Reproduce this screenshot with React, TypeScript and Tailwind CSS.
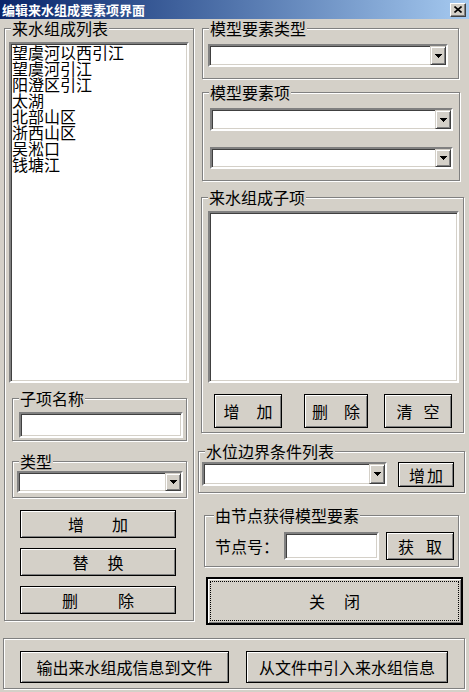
import React from 'react';

const sunken =
  'border-2 border-t-[#808080] border-l-[#808080] border-b-white border-r-white shadow-[inset_1px_1px_0_#404040,inset_-1px_-1px_0_#d4d0c8] bg-white';

const raised =
  'border border-black bg-[#d4d0c8] shadow-[inset_1px_1px_0_#fff,inset_-1px_-1px_0_#808080]';

function Group({
  label,
  className = '',
  labelLeft = 'left-[6px]',
  children,
}: {
  label: string;
  className?: string;
  labelLeft?: string;
  children?: React.ReactNode;
}) {
  return (
    <div className={`relative border border-[#808080] shadow-[1px_1px_0_#fff,inset_1px_1px_0_#fff] ${className}`}>
      <span className={`absolute -top-[9px] ${labelLeft} bg-[#d4d0c8] px-[1px] text-[16px] leading-[16px] whitespace-nowrap`}>
        {label}
      </span>
      {children}
    </div>
  );
}

function Combo({ className = '' }: { className?: string }) {
  return (
    <div className={`${sunken} flex justify-end ${className}`}>
      <div className="w-[16px] h-full bg-[#d4d0c8] border border-t-[#d4d0c8] border-l-[#d4d0c8] border-b-[#404040] border-r-[#404040] shadow-[inset_1px_1px_0_#fff,inset_-1px_-1px_0_#808080] flex items-center justify-center">
        <svg width="7" height="4" shapeRendering="crispEdges">
          <path d="M0 0h7v1h-1v1h-1v1h-1v1h-1v-1h-1v-1h-1v-1h-1z" fill="#000" />
        </svg>
      </div>
    </div>
  );
}

function Btn({ className = '', children }: { className?: string; children: React.ReactNode }) {
  return (
    <div className={`${raised} flex items-center justify-center text-[16px] leading-[16px] whitespace-nowrap ${className}`}>
      {children}
    </div>
  );
}

function Two({ a, b, gap }: { a: string; b: string; gap: string }) {
  return (
    <>
      <span>{a}</span>
      <span className={gap}>{b}</span>
    </>
  );
}

const items = ['望虞河以西引江', '望虞河引江', '阳澄区引江', '太湖', '北部山区', '浙西山区', '吴淞口', '钱塘江'];

export default function App() {
  return (
    <div className="w-[469px] h-[692px] bg-[#d4d0c8] overflow-hidden text-black font-['Noto_Sans_CJK_SC',sans-serif]">
      {/* title bar */}
      <div className="h-[19px] flex items-center justify-between bg-linear-to-r from-[#0a246a] to-[#a6caf0] pl-[2px] pr-[3px]">
        <span className="text-white font-bold text-[13px] leading-[13px]">编辑来水组成要素项界面</span>
        <div className="w-[16px] h-[14px] bg-[#d4d0c8] border border-t-white border-l-white border-b-[#404040] border-r-[#404040] shadow-[inset_-1px_-1px_0_#808080] flex items-center justify-center">
          <svg width="8" height="7">
            <path d="M0.5 0.5L7.5 6.5M7.5 0.5L0.5 6.5" stroke="#000" strokeWidth="1.6" />
          </svg>
        </div>
      </div>

      <div className="flex items-start h-[606px]">
        {/* left column */}
        <Group label="来水组成列表" className="ml-[4px] mt-[9px] w-[190px] h-[593px]">
          <div className={`${sunken} ml-[4px] mt-[13px] w-[180px] h-[341px] pl-[1px] text-[16px] leading-[16px]`}>
            {items.map((t) => (
              <div key={t}>{t}</div>
            ))}
          </div>
          <Group label="子项名称" className="ml-[7px] mt-[15px] w-[175px] h-[43px]">
            <div className={`${sunken} ml-[6px] mt-[13px] w-[164px] h-[26px]`} />
          </Group>
          <Group label="类型" className="ml-[7px] mt-[20px] w-[175px] h-[37px]">
            <Combo className="ml-[4px] mt-[9px] w-[166px] h-[22px]" />
          </Group>
          <Btn className="ml-[15px] mt-[12px] w-[156px] h-[28px]">
            <Two a="增" b="加" gap="ml-[28px]" />
          </Btn>
          <Btn className="ml-[15px] mt-[10px] w-[156px] h-[28px]">
            <Two a="替" b="换" gap="ml-[19px]" />
          </Btn>
          <Btn className="ml-[15px] mt-[10px] w-[156px] h-[28px]">
            <Two a="删" b="除" gap="ml-[40px]" />
          </Btn>
        </Group>

        {/* right column */}
        <div className="ml-[4px] w-[267px] flex flex-col items-start">
          <Group label="模型要素类型" className="ml-[4px] mt-[9px] w-[257px] h-[51px]">
            <Combo className="ml-[5px] mt-[15px] w-[240px] h-[23px]" />
          </Group>
          <Group label="模型要素项" className="ml-[4px] mt-[13px] w-[258px] h-[89px]">
            <Combo className="ml-[7px] mt-[15px] w-[243px] h-[23px]" />
            <Combo className="ml-[7px] mt-[16px] w-[243px] h-[22px]" />
          </Group>
          <Group label="来水组成子项" className="ml-[3px] mt-[16px] w-[263px] h-[236px]">
            <div className={`${sunken} ml-[6px] mt-[13px] w-[251px] h-[172px]`} />
            <div className="flex mt-[11px] ml-[12px]">
              <Btn className="w-[68px] h-[34px]">
                <Two a="增" b="加" gap="ml-[17px]" />
              </Btn>
              <Btn className="ml-[22px] w-[64px] h-[34px]">
                <Two a="删" b="除" gap="ml-[16px]" />
              </Btn>
              <Btn className="ml-[16px] w-[68px] h-[34px]">
                <Two a="清" b="空" gap="ml-[11px]" />
              </Btn>
            </div>
          </Group>
          <Group label="水位边界条件列表" className="mt-[18px] w-[267px] h-[42px]">
            <div className="flex items-start mt-[10px] ml-[3px]">
              <Combo className="w-[185px] h-[24px]" />
              <Btn className="ml-[11px] w-[56px] h-[25px]">
                <Two a="增" b="加" gap="ml-[2px]" />
              </Btn>
            </div>
          </Group>
          <Group label="由节点获得模型要素" labelLeft="left-[9px]" className="ml-[6px] mt-[22px] w-[255px] h-[52px]">
            <div className="flex items-center mt-[16px] ml-[10px]">
              <span className="w-[69px] text-[16px] leading-[16px]">节点号：</span>
              <div className={`${sunken} w-[95px] h-[28px]`} />
              <Btn className="ml-[7px] w-[68px] h-[28px]">
                <Two a="获" b="取" gap="ml-[12px]" />
              </Btn>
            </div>
          </Group>
          <div className="ml-[8px] mt-[10px] w-[257px] h-[48px] border-2 border-black bg-[#d4d0c8] shadow-[inset_1px_1px_0_#fff,inset_-1px_-1px_0_#808080] p-[2px] flex">
            <div className="flex-1 border border-dotted border-black flex items-center justify-center text-[16px] leading-[16px]">
              <Two a="关" b="闭" gap="ml-[19px]" />
            </div>
          </div>
        </div>
      </div>

      {/* bottom */}
      <Group label="" className="ml-[3px] mt-[13px] w-[462px] h-[51px]">
        <div className="flex mt-[12px] ml-[16px]">
          <Btn className="w-[209px] h-[32px]">输出来水组成信息到文件</Btn>
          <Btn className="ml-[17px] w-[202px] h-[32px]">从文件中引入来水组信息</Btn>
        </div>
      </Group>
    </div>
  );
}
